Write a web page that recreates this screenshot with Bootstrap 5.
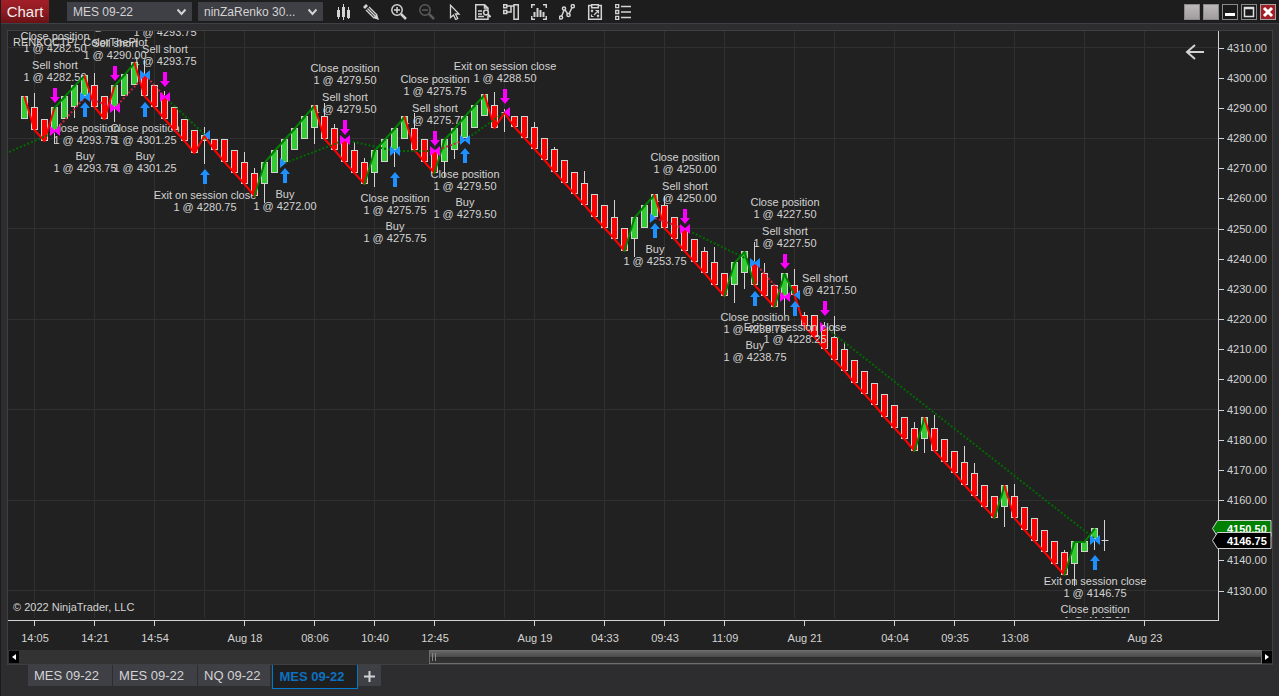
<!DOCTYPE html>
<html lang="en">
<head>
<meta charset="utf-8">
<meta name="viewport" content="width=device-width, initial-scale=1">
<title>Chart - MES 09-22</title>
<link href="https://cdn.jsdelivr.net/npm/bootstrap@5.3.0/dist/css/bootstrap.min.css" rel="stylesheet">
<style>
  body { background: #2d2d30; color: #d3d3d3; font-family: "Liberation Sans", Arial, sans-serif; font-size: 12px; line-height: 16px; border-left: 1px solid #1b1b1c; }
  .title-bar { background: #1d1d1d; height: 24px; border-bottom: 1px solid #3f3f46; padding-right: 3px; }
  .app-name { background: linear-gradient(#a31f28, #8f1a21 50%, #6a1216); width: 48px; height: 23px; font-size: 15px; line-height: 23px; color: #eee; margin: 0 18px 0 0; font-weight: 400; }
  .picker { height: 19px; width: 125px; margin: 2px 6px 0 0; }
  .picker select { appearance: none; display: block; background: #3f3f46; color: #d3d3d3; border: 0; width: 100%; height: 19px; padding: 1px 22px 0 6px; font-size: 12px; line-height: 18px; text-overflow: ellipsis; }
  .picker svg { right: 6px; top: 6px; pointer-events: none; }
  .tool { width: 28px; height: 23px; color: #d3d3d3; background: none; border: 0; padding: 0; line-height: 1; }
  .tool:disabled { color: #5a5a5a; }
  .tool svg, .win svg { display: block; margin: auto; }
  .tool svg { fill: none; stroke: currentColor; stroke-width: 1.5; }
  .win { width: 16px; height: 16px; padding: 0; border: 1px solid #8a8a8a; background: #1a1a1a; }
  .win-link { background: linear-gradient(#bdb9bb, #a19d9f); }
  .win-close { background: #a31f28; border-color: #a8a0a0; }
  .chart-panel { margin: 6px 6px 0 6px; border: 1px solid #3f3f42; background: #212121; }
  .chart-panel > svg { display: block; width: 100%; height: auto; }
  .chart-panel text { font-size: 11px; fill: #d3d3d3; }
  .chart-panel .price-tag { fill: #fff; font-weight: 700; }
  .scroller { background: #333; height: 14px; padding-left: 1px; }
  .scroller button { width: 10px; height: 12px; margin-top: 1px; background: #000; border: 0; padding: 0; }
  .scroller button svg { display: block; margin: auto; }
  .thumb { width: 67%; height: 14px; border: 1px solid #6e6e6e; background: linear-gradient(#666, #4a4a4a 50%, #2d2d2d 50%, #333); }
  .grip { width: 4px; height: 8px; margin: 2px; border: solid #888; border-width: 0 1px; }
  .tabs { padding-left: 27px; height: 31px; gap: 1px; }
  .tab { background: #3f3f46; color: #d3d3d3; border: 0; height: 21px; padding: 0 13px 0 6px; font-size: 13px; line-height: 21px; white-space: nowrap; }
  .tab-narrow { padding-right: 10px; margin-right: 1px; }
  .tab-current { background: #1f1f1f; color: #0e70c0; border: 1px solid #007acc; border-top: 0; height: 24px; padding-right: 12px; font-weight: 700; line-height: 22px; }
  .tab-add { width: 23px; padding: 0; margin-left: -1px; }
</style>
</head>
<body>
<header class="title-bar d-flex align-items-start">
  <h1 class="app-name text-center">Chart</h1>
  <div class="picker position-relative">
    <select aria-label="Instrument"><option>MES 09-22</option></select>
    <svg class="position-absolute" width="9" height="8" fill="none" stroke="#d3d3d3" stroke-width="2"><path d="M.5 1.5 4.5 6 8.5 1.5"/></svg>
  </div>
  <div class="picker position-relative">
    <select aria-label="Interval"><option>ninZaRenko 30...</option></select>
    <svg class="position-absolute" width="9" height="8" fill="none" stroke="#d3d3d3" stroke-width="2"><path d="M.5 1.5 4.5 6 8.5 1.5"/></svg>
  </div>
  <div class="d-flex flex-grow-1">
    <button class="tool" aria-label="Chart style"><svg width="16" height="16"><path d="M3.500 3v12M8.500 0v16M13.500 3v12" stroke-width="1"/><path d="M2 6h3v7H2zM7 3h3v10H7zM12 6h3v8h-3z" fill="currentColor" stroke="none"/></svg></button>
    <button class="tool" aria-label="Drawing tools"><svg width="16" height="16"><path d="M0 3 3 0l2 2-3 3z" fill="currentColor" stroke="none"/><path d="m3 6 8 8M4.500 4.500l8 8M6 3l8 8" stroke-width="1.300"/><path d="m10 14 4-4 2 6z" fill="currentColor" stroke="none"/></svg></button>
    <button class="tool" aria-label="Zoom in"><svg width="16" height="16"><circle cx="6" cy="6" r="5.200"/><path d="M3 6h6M6 3v6"/><path d="m10 10 5 5" stroke-width="2.500"/></svg></button>
    <button class="tool" aria-label="Zoom out" disabled><svg width="16" height="16"><circle cx="6" cy="6" r="5.200"/><path d="M3 6h6"/><path d="m10 10 5 5" stroke-width="2.500"/></svg></button>
    <button class="tool" aria-label="Pointer"><svg width="16" height="16"><path d="M3.500 1.200v12.300L6.500 11l2.200 4.500 2-1L8.500 10H12z" stroke-width="1.300"/></svg></button>
    <button class="tool" aria-label="Data box"><svg width="16" height="16"><path d="M13 12v3.300H.7V.7h8.800L13 4v2M9.500.7V4H13"/><path d="M3 7h4M3 10h4M3 12.500h6" stroke-width="1.300"/><circle cx="11" cy="8.500" r="2.400"/><path d="m12.500 10 3 3" stroke-width="2"/></svg></button>
    <button class="tool" aria-label="Chart trader"><svg width="16" height="16"><path d="M.7.7h3v3h-3zM.7 6.500h3v3h-3zM3.700 2h7M11 .7h4.300v14.600H11zM3.700 8H8V2"/></svg></button>
    <button class="tool" aria-label="Data series"><svg width="16" height="16"><path d="M.7 4V.7H4M12 .7h3.300V4M.7 12v3.300H4M12 15.300h3.300V12"/><path d="M3.500 13V8M6.500 13V4M9.500 13V6M12.500 13V8" stroke-width="2"/></svg></button>
    <button class="tool" aria-label="Indicators"><svg width="16" height="16"><path d="M2.500 12.500 5.500 5l4 6 4-8.500"/><g fill="#1d1d1d"><circle cx="2" cy="13.500" r="1.600"/><circle cx="5" cy="4.500" r="1.600"/><circle cx="9.500" cy="11" r="1.600"/><circle cx="13.800" cy="2.200" r="1.600"/></g></svg></button>
    <button class="tool" aria-label="Strategies"><svg width="16" height="16"><path d="M4 1.500H1.700v13.800h12.600V1.500H12M4.700.7h6.600v3H4.700z"/><path d="m7 11 4-4M8.500 6.500h3v3M4 6l2 2M6 6 4 8M10 11l2 2M12 11l-2 2M4.500 10.500v2h2" stroke-width="1.200"/></svg></button>
    <button class="tool" aria-label="Properties"><svg width="16" height="16"><path d="M.7.7h3v3h-3zM.7 6.500h3v3h-3zM.7 12.300h3v3h-3zM6 2.500h10M6 8h10M6 13.500h10" stroke-width="1.300"/></svg></button>
  </div>
  <div class="d-flex mt-1" style="gap:3px">
    <button class="win win-link" aria-label="Instrument link"></button>
    <button class="win win-link" aria-label="Interval link"></button>
    <button class="win" aria-label="Minimize"><svg width="14" height="14"><path d="M2 8h10v3H2z" fill="#fff"/></svg></button>
    <button class="win" aria-label="Maximize"><svg width="14" height="14"><path d="M2.500 2.500h9v9h-9zM2 3.500h10" fill="none" stroke="#ddd" stroke-width="1.500"/></svg></button>
    <button class="win win-close" aria-label="Close"><svg width="14" height="14"><path d="m3 3 8 8m0-8-8 8" stroke="#fff" stroke-width="3"/></svg></button>
  </div>
</header>

<main class="chart-panel">
  <svg id="chart" viewBox="8 31 1264 619" role="img" aria-label="MES 09-22 Renko chart">
    <defs><clipPath id="plot"><rect x="8" y="31" width="1210" height="587"/></clipPath></defs>
  </svg>
  <div class="scroller d-flex">
    <button aria-label="Scroll left"><svg width="4" height="6"><path d="M4 0v6L0 3z" fill="#fff"/></svg></button>
    <div class="flex-grow-1"><div class="thumb ms-auto"><div class="grip"></div></div></div>
    <button aria-label="Scroll right"><svg width="4" height="6"><path d="M0 0v6l4-3z" fill="#fff"/></svg></button>
  </div>
</main>

<nav class="tabs d-flex align-items-start" aria-label="Chart tabs">
  <button class="tab">MES 09-22</button>
  <button class="tab">MES 09-22</button>
  <button class="tab tab-narrow">NQ 09-22</button>
  <button class="tab tab-current">MES 09-22</button>
  <button class="tab tab-add" aria-label="New tab"><svg width="11" height="11"><path d="M5.500 0v11M0 5.500h11" stroke="#d3d3d3" stroke-width="2"/></svg></button>
</nav>

<script src="https://cdn.jsdelivr.net/npm/bootstrap@5.3.0/dist/js/bootstrap.bundle.min.js"></script>
<script>
const chart = document.getElementById('chart');
let out = '';
const line = (x1, y1, x2, y2, c, extra = '') =>
  `<line x1="${x1}" y1="${y1}" x2="${x2}" y2="${y2}" stroke="${c}" ${extra}/>`;
const text = (x, y, s, a = 'middle', extra = '') =>
  `<text x="${x}" y="${y + 4}" text-anchor="${a}" ${extra}>${s}</text>`;

// Grid
for (const y of [47, 138, 228, 319, 409, 500, 590]) out += line(8, y + .5, 1218, y + .5, '#303030');
for (const x of [34, 94, 154, 204, 244, 314, 374, 434, 504, 534, 604, 664, 724, 794, 834, 894, 954, 1014, 1084, 1144])
  out += line(x + .5, 31, x + .5, 618, '#303030');

// Execution labels: bar x, first line y, action, price
const labels = [
  [55,36,'Close position','4282.50'],[55,65,'Sell short','4282.50'],
  [115,14,'Close position','4290.00'],[115,43,'Sell short','4290.00'],
  [165,20,'Close position','4293.75'],[165,49,'Sell short','4293.75'],
  [85,128,'Close position','4293.75'],[85,156,'Buy','4293.75'],
  [145,128,'Close position','4301.25'],[145,156,'Buy','4301.25'],
  [205,195,'Exit on session close','4280.75'],[285,194,'Buy','4272.00'],
  [345,68,'Close position','4279.50'],[345,97,'Sell short','4279.50'],
  [395,198,'Close position','4275.75'],[395,226,'Buy','4275.75'],
  [435,79,'Close position','4275.75'],[435,108,'Sell short','4275.75'],
  [465,174,'Close position','4279.50'],[465,202,'Buy','4279.50'],
  [505,66,'Exit on session close','4288.50'],[655,249,'Buy','4253.75'],
  [685,157,'Close position','4250.00'],[685,186,'Sell short','4250.00'],
  [755,317,'Close position','4238.75'],[755,345,'Buy','4238.75'],
  [785,202,'Close position','4227.50'],[785,231,'Sell short','4227.50'],
  [825,278,'Sell short','4217.50'],
  [1095,581,'Exit on session close','4146.75'],[1095,609,'Close position','4147.25']];
const label = ([x, y, s, p]) => text(x, y, s) + text(x, y + 12, '1 @ ' + p);
out += '<g clip-path="url(#plot)">' + labels.map(label).join('');
out += text(13, 42, 'RENKOCTP/&#160; ColorThePlot', 'start');

// Bars: direction, top, bottom, optional wick end; D is a doji with both wick ends
const bars = `G96 119|R107 130 93|R119 141|G107 130 144|G96 119|G85 107 118|G75 96|R85 107 73|R96 119|G85 107 122|G74 96|G62 85|R74 96 60|R85 107|R96 119 91|R107 130|R119 141|R130 153|G135 141 127 164|R139 150
R139 162|R150 173|R162 184 152|R173 196 168|G162 184 203|G150 173|G139 162|G128 150|G116 139|G105 128 144|R116 139 103|R128 150 124|R139 162|R150 173 142|R162 184 158|G150 173 187|G139 162|G128 150 167|G116 139|R128 150 113
R139 162|R151 173|G139 162 177|G128 150 159|G116 138|G105 128|G94 116|R105 128 92|D112 113 109 132|R116 127|R116 138|R127 149 122|R138 160|R149 172 147|R160 183|R172 194|R183 205 171|R194 217|R205 228|R217 239 200
R228 251|G217 239 257|G205 228|G194 217|R205 228 196|R217 239|R228 251|R239 262|R251 273 247|R262 285 247|R273 296|G262 285 303|G251 273 289|R263 285 242|R273 296 263|R285 307|G273 296 315|R285 295 269|R315 326 312|R315 337
R327 349 322|R337 360 316|R349 371 342|R360 383|R371 394|R383 405|R394 417|R405 428|R417 439|R428 451 422|G417 439 453|R428 451 415|R439 462|R451 473|R462 485 446|R473 496 463|R485 507|R496 518|G485 507 527|R496 518 484
R507 530|R518 541|R530 552|R541 564|R552 575 550|G541 564 586|G541 552|G528 539 550|D540 541 520 551`
  .split(/[|\n]/).map((s, i) => {
    const [t, b, w, w2] = s.slice(1).split(' ').map(Number);
    return { x: 24.5 + 10 * i, k: s[0], t, b, w, w2 };
  });
for (const c of bars) {
  if (c.w) out += line(c.x, c.w, c.x, c.w2 || (c.w < c.t ? c.t : c.b), '#d3d3d3');
  if (c.k === 'D') out += line(c.x - 3, c.t + .5, c.x + 4, c.t + .5, '#d3d3d3');
  else out += `<rect x="${c.x - 3}" y="${c.t + .5}" width="6" height="${c.b - c.t - 1}" fill="${c.k === 'G' ? '#32cd32' : '#f00'}" stroke="#d3d3d3"/>`;
}

// Trend plot: on the high of rising bars, on the low of falling ones
const pts = bars.slice(0, -1).map(c => [c.x, c.k === 'R' ? c.b : c.t + 1]);
pts[0][1] = 97;
const redInto = [3, 9, 18], greenInto = [73, 77];
for (let i = 1; i < pts.length; i++) {
  const green = greenInto.includes(i) || (bars[i].k === 'G' && !redInto.includes(i));
  out += line(...pts[i - 1], ...pts[i], green ? '#008000' : '#f00', 'stroke-width="2" stroke-linecap="round"');
}

// Trade connections
const G = '#006a00', C = '#c8203f';
for (const [a, b, c, d, col] of [[8,152,54,132,G],[54,131,84,97,C],[84,97,114,108,C],[114,108,144,75,C],[144,75,164,97,C],
  [164,97,204,135,G],[284,163,344,140,G],[344,140,394,151,G],[394,151,434,151,G],[434,151,464,140,C],[464,140,504,112,G],
  [654,218,684,229,C],[684,229,754,263,G],[754,263,784,297,C],[784,297,794,294,C],[824,327,1094,539,G]])
  out += line(a + 1, b, c + 1, d, col, 'stroke-width="2" stroke-dasharray="2 2"');

// Fill markers: bar x, y, colour, sides
const M = '#f0f', B = '#1e90ff';
for (const [x, y, col, s] of [[54,131,M,3],[84,97,B,3],[114,108,M,3],[144,75,B,3],[164,97,M,3],[204,135,B,2],[284,163,B,1],
  [344,140,M,3],[394,151,B,3],[434,151,M,3],[464,140,B,3],[504,112,M,2],[654,218,B,1],[684,229,M,3],[754,263,B,3],
  [784,297,M,3],[794,295,B,2],[824,327,M,1],[1094,540,B,3]]) {
  const c = x + 1;
  if (s & 1) out += `<path d="M${c - 5} ${y - 5}v10l6-5z" fill="${col}"/>`;
  if (s & 2) out += `<path d="M${c + 5} ${y - 5}v10l-6-5z" fill="${col}"/>`;
}
for (const [x, y] of [[54,88],[114,66],[164,72],[344,120],[434,131],[504,89],[684,209],[784,254],[824,301]])
  out += `<path d="M${x - 1} ${y}h4v9h3l-5 6-5-6h3z" fill="${M}"/>`;
for (const [x, y] of [[84,102],[144,102],[204,169],[284,168],[394,172],[464,148],[654,223],[754,291],[794,301],[1094,555]])
  out += `<path d="M${x - 1} ${y + 15}h4v-9h3l-5-6-5 6h3z" fill="${B}"/>`;
out += label([795, 327, 'Exit on session close', '4228.25']) + '</g>';

// Axes
out += line(1218.5, 31, 1218.5, 621, '#d3d3d3') + line(8, 620.5, 1219, 620.5, '#d3d3d3');
for (let p = 4310; p >= 4130; p -= 10) {
  const y = Math.round(47.5 + (4310 - p) * 3.0167);
  out += line(1219, y + .5, 1224, y + .5, '#d3d3d3');
  if (p !== 4150) out += text(1227, y, p + '.00', 'start');
}
for (const [x, s] of [[34,'14:05'],[94,'14:21'],[154,'14:54'],[244,'Aug 18'],[314,'08:06'],[374,'10:40'],[434,'12:45'],[534,'Aug 19'],
  [604,'04:33'],[664,'09:43'],[724,'11:09'],[804,'Aug 21'],[894,'04:04'],[954,'09:35'],[1014,'13:08'],[1144,'Aug 23']])
  out += line(x + .5, 621, x + .5, 626, '#d3d3d3') + text(x + 1, 638, s);

// Price tags, copyright and back arrow
out += '<path d="M1271 520.500h-53.500l-5 8 5 8h53.500z" fill="#008000" stroke="#d3d3d3"/>' + text(1227, 529, '4150.50', 'start', 'class="price-tag"');
out += '<path d="M1271 532.500h-53.500l-5 8 5 8h53.500z" fill="#000" stroke="#d3d3d3"/>' + text(1227, 541, '4146.75', 'start', 'class="price-tag"');
out += text(13, 607, '© 2022 NinjaTrader, LLC', 'start');
out += '<path d="M1204 52h-17m8-7-8 7 8 7" fill="none" stroke="#d3d3d3" stroke-width="2"/>';
chart.insertAdjacentHTML('beforeend', out);
</script>
</body>
</html>
